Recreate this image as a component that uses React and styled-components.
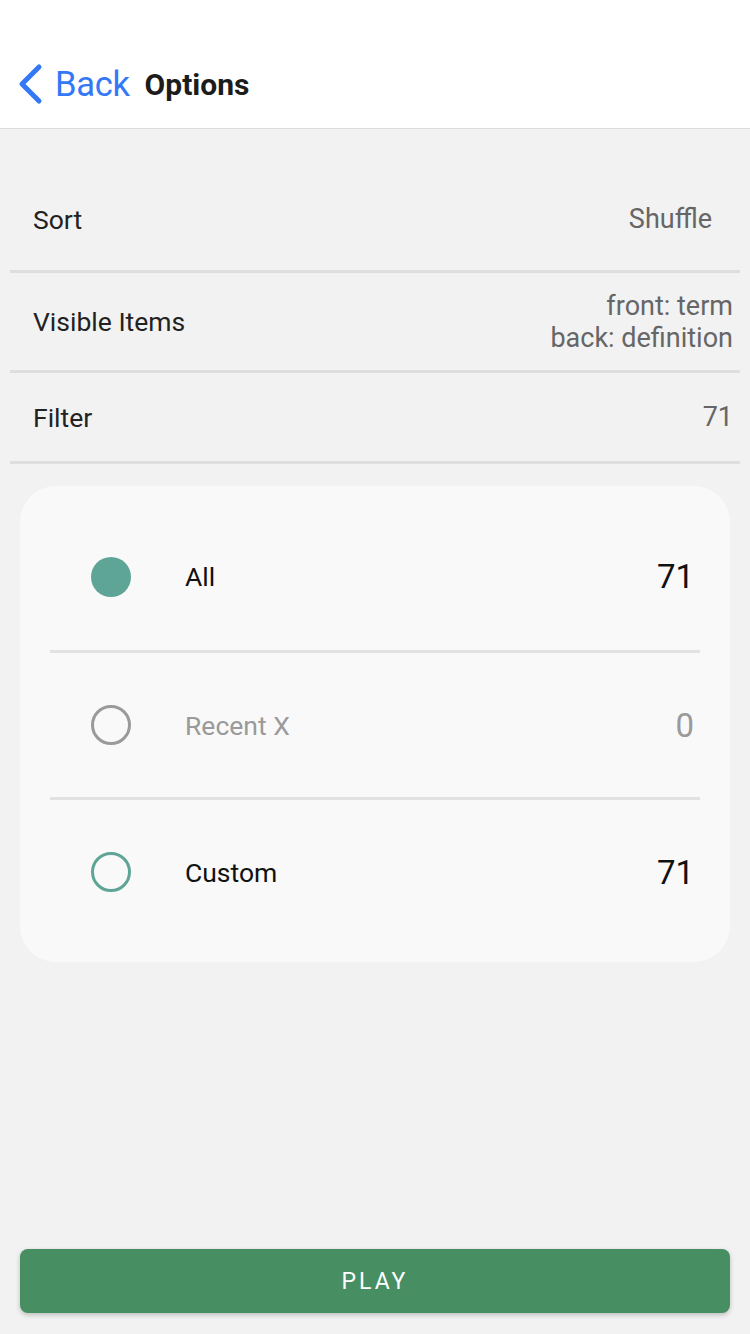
import React from 'react';
import styled, { createGlobalStyle } from 'styled-components';

const SETTINGS = [
  { label: 'Sort', value: ['Shuffle'], inset: true, height: 105 },
  { label: 'Visible Items', value: ['front: term', 'back: definition'], height: 100 },
  { label: 'Filter', value: ['71'], height: 91 },
];

const FILTERS = [
  { label: 'All', count: 71, state: 'checked' },
  { label: 'Recent X', count: 0, state: 'disabled' },
  { label: 'Custom', count: 71, state: 'open' },
];

const Options = () => {
  return (
    <>
      <GlobalStyle />
      <Page>
        <Header>
          <BackButton>
            <svg width="26" height="42" viewBox="0 0 26 42">
              <path d="M22 4 L5 21 L22 38" fill="none" stroke="#3478f6" strokeWidth="5" strokeLinecap="round" strokeLinejoin="round" />
            </svg>
            <BackLabel>Back</BackLabel>
          </BackButton>
          <Title>Options</Title>
        </Header>

        <Content>
          <SettingsList>
            {SETTINGS.map((s) => (
              <SettingRow key={s.label} $height={s.height}>
                <SettingLabel>{s.label}</SettingLabel>
                <SettingValue $inset={s.inset}>
                  {s.value.map((line) => (
                    <div key={line}>{line}</div>
                  ))}
                </SettingValue>
              </SettingRow>
            ))}
          </SettingsList>

          <FilterCard>
            {FILTERS.map((f) => (
              <FilterRow key={f.label}>
                <Radio $state={f.state} />
                <FilterLabel $muted={f.state === 'disabled'}>{f.label}</FilterLabel>
                <FilterCount $muted={f.state === 'disabled'}>{f.count}</FilterCount>
              </FilterRow>
            ))}
          </FilterCard>
        </Content>

        <Footer>
          <PlayButton>PLAY</PlayButton>
        </Footer>
      </Page>
    </>
  );
};

const GlobalStyle = createGlobalStyle`
  html, body {
    margin: 0;
    padding: 0;
    background: #f2f2f2;
    font-family: Roboto, "Noto Sans", sans-serif;
  }
  * { box-sizing: border-box; }
`;

const Page = styled.div`
  width: 750px;
  height: 1334px;
  display: flex;
  flex-direction: column;
  background: #f2f2f2;
`;

const Header = styled.div`
  height: 129px;
  flex-shrink: 0;
  background: #fff;
  border-bottom: 1px solid #dcdcdc;
  display: flex;
  align-items: center;
  padding: 40px 0 0 17px;
  gap: 15px;
`;

const BackButton = styled.div`
  display: flex;
  align-items: center;
  gap: 12px;
`;

const BackLabel = styled.span`
  font-size: 34.5px;
  color: #3478f6;
  letter-spacing: -0.3px;
`;

const Title = styled.span`
  font-size: 30px;
  font-weight: 700;
  color: #1c1c1c;
`;

const Content = styled.div`
  flex: 1;
  padding-top: 39px;
`;

const SettingsList = styled.div`
  padding: 0 10px;
`;

const SettingRow = styled.div`
  height: ${(p) => p.$height}px;
  display: flex;
  align-items: center;
  justify-content: space-between;
  padding: 0 7px 0 23px;
  border-bottom: 3px solid #dedede;
`;

const SettingLabel = styled.span`
  font-size: 26.5px;
  color: #222;
`;

const SettingValue = styled.div`
  font-size: 27px;
  line-height: 32px;
  color: #666;
  text-align: right;
  padding-right: ${(p) => (p.$inset ? '21px' : '0')};
`;

const FilterCard = styled.div`
  margin: 22px 20px 0;
  background: #f9f9f9;
  border-radius: 36px;
  padding: 17px 30px 18px;
`;

const FilterRow = styled.div`
  height: 147px;
  display: flex;
  align-items: center;
  padding: 0 9px 0 41px;
  & + & { border-top: 3px solid #e2e2e2; }
`;

const Radio = styled.span`
  width: 40px;
  height: 40px;
  border-radius: 50%;
  flex-shrink: 0;
  background: ${(p) => (p.$state === 'checked' ? '#5fa597' : 'transparent')};
  border: ${(p) =>
    p.$state === 'checked'
      ? 'none'
      : `3.5px solid ${p.$state === 'disabled' ? '#9a9a9a' : '#5fa597'}`};
`;

const FilterLabel = styled.span`
  margin-left: 54px;
  font-size: 26.5px;
  color: ${(p) => (p.$muted ? '#9a9a9a' : '#111')};
  flex: 1;
`;

const FilterCount = styled.span`
  font-size: 33px;
  color: ${(p) => (p.$muted ? '#9a9a9a' : '#111')};
  margin-right: -3px;
`;

const Footer = styled.div`
  padding: 0 20px 21px;
`;

const PlayButton = styled.button`
  width: 100%;
  height: 64px;
  border: none;
  border-radius: 8px;
  background: #478e63;
  color: #fff;
  font-family: Roboto, "Noto Sans", sans-serif;
  font-size: 23px;
  font-weight: 400;
  letter-spacing: 3px;
  box-shadow: 0 2px 5px rgba(0, 0, 0, 0.22);
`;

export default Options;
